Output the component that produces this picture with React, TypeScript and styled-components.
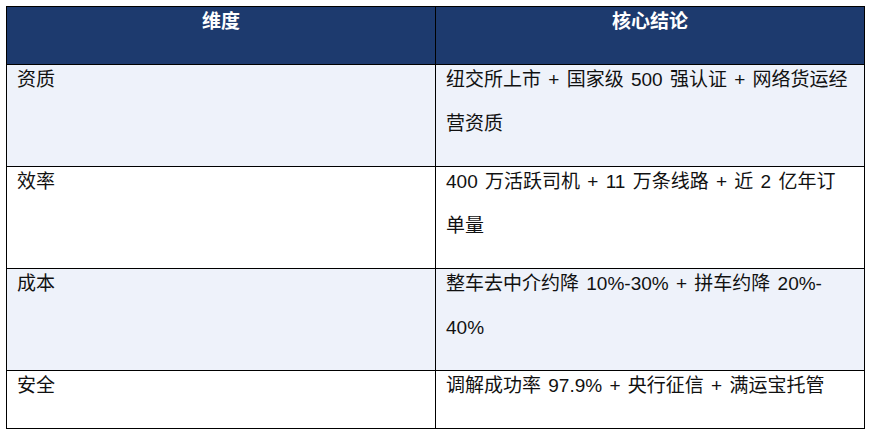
import React from "react";
import styled, { createGlobalStyle } from "styled-components";

const GlobalStyle = createGlobalStyle`
  html, body {
    margin: 0;
    padding: 0;
    background: #ffffff;
  }
  body {
    padding: 6px;
    font-family: "Liberation Sans", "Noto Sans CJK SC", sans-serif;
  }
`;

const Table = styled.table`
  width: 859px;
  border-collapse: collapse;
  table-layout: fixed;
  font-size: 19px;
  color: #111111;
`;

const HeadCell = styled.th`
  width: 50%;
  border: 1px solid #000000;
  background: #1d3a6e;
  color: #ffffff;
  font-weight: 700;
  text-align: center;
  vertical-align: top;
  padding: 0 10px 20px;
  line-height: 44px;
`;

const Row = styled.tr<{ $shaded: boolean }>`
  background: ${(p) => (p.$shaded ? "#eef2fa" : "#ffffff")};
`;

const Cell = styled.td`
  border: 1px solid #000000;
  vertical-align: top;
  text-align: left;
  padding: 0 10px 20px;
  line-height: 44px;
`;

const Text = styled.div`
  margin-top: -7px;
  white-space: nowrap;
  word-spacing: 2px;
`;

const rows: { key: string; lines: string[] }[] = [
  { key: "资质", lines: ["纽交所上市 + 国家级 500 强认证 + 网络货运经", "营资质"] },
  { key: "效率", lines: ["400 万活跃司机 + 11 万条线路 + 近 2 亿年订", "单量"] },
  { key: "成本", lines: ["整车去中介约降 10%-30% + 拼车约降 20%-", "40%"] },
  { key: "安全", lines: ["调解成功率 97.9% + 央行征信 + 满运宝托管"] },
];

export default function App() {
  return (
    <>
      <GlobalStyle />
      <Table>
        <thead>
          <tr>
            <HeadCell>
              <Text>维度</Text>
            </HeadCell>
            <HeadCell>
              <Text>核心结论</Text>
            </HeadCell>
          </tr>
        </thead>
        <tbody>
          {rows.map((r, i) => (
            <Row key={r.key} $shaded={i % 2 === 0}>
              <Cell>
                <Text>{r.key}</Text>
              </Cell>
              <Cell>
                <Text>
                  {r.lines.map((l, j) => (
                    <React.Fragment key={j}>
                      {j > 0 && <br />}
                      {l}
                    </React.Fragment>
                  ))}
                </Text>
              </Cell>
            </Row>
          ))}
        </tbody>
      </Table>
    </>
  );
}
